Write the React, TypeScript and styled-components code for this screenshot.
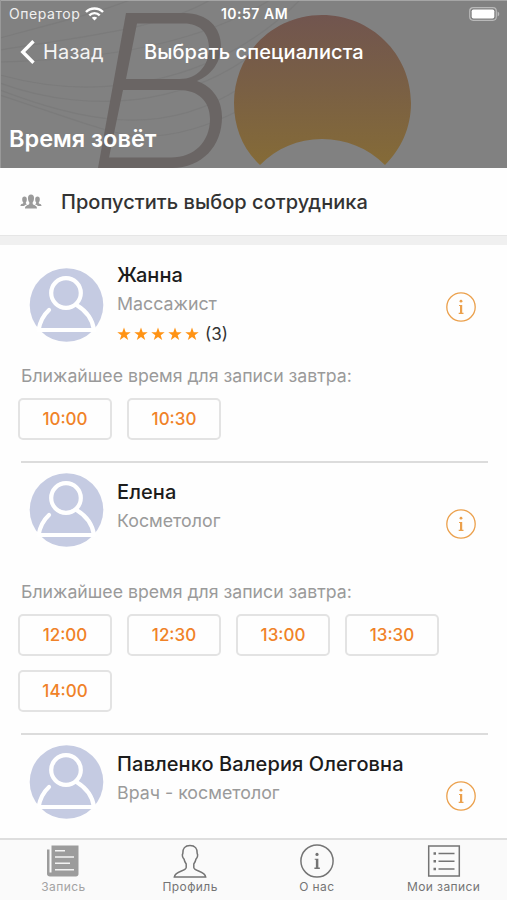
import styled, { createGlobalStyle } from "styled-components";

const GlobalStyle = createGlobalStyle`
  * {
    box-sizing: border-box;
  }
  body {
    margin: 0;
    background-color: #fff;
    font-family: Inter, "Liberation Sans", sans-serif;
  }
`;

const Screen = styled.div`
  width: 507px;
  height: 900px;
  display: flex;
  flex-direction: column;
  overflow: hidden;
  background-color: #fefefe;
`;

/* Header */
const SHeader = styled.header`
  position: relative;
  flex: none;
  height: 168px;
  overflow: hidden;
  background-color: #818181;
  color: #fff;
`;
const Cover = styled.svg`
  position: absolute;
  top: 0;
  left: 0;
`;
const HeaderContent = styled.div`
  position: relative;
  height: 100%;
  display: flex;
  flex-direction: column;
`;
const StatusBar = styled.div`
  height: 27px;
  padding: 0 7px 0 9px;
  display: grid;
  grid-template-columns: 1fr auto 1fr;
  align-items: center;
`;
const Carrier = styled.div`
  display: flex;
  align-items: center;
  gap: 5px;
  font-size: 14px;
  letter-spacing: 0.55px;
  color: #f0f0f0;
`;
const Clock = styled.div`
  font-size: 14px;
  font-weight: 600;
  letter-spacing: 0.5px;
`;
const Battery = styled.svg`
  justify-self: end;
`;
const NavBar = styled.div`
  height: 49px;
  padding-left: 20px;
  display: flex;
  align-items: center;
`;
const BackButton = styled.div`
  width: 124px;
  display: flex;
  align-items: center;
  gap: 8px;
  font-size: 20px;
  letter-spacing: 0.2px;
  color: #f4f4f4;
`;
const NavTitle = styled.div`
  font-size: 20px;
  font-weight: 500;
  letter-spacing: 0.1px;
`;
const SalonName = styled.h1`
  margin: auto 0 0;
  padding: 0 0 15px 9px;
  font-size: 23.5px;
  line-height: 28px;
  font-weight: 600;
`;

/* List */
const SkipRow = styled.div`
  flex: none;
  height: 77px;
  padding: 0 20px;
  display: flex;
  align-items: center;
  gap: 19px;
  border-bottom: 9px solid #f0f0f0;
  box-shadow: inset 0 -1px #e6e6e6;
  font-size: 20px;
  font-weight: 500;
  letter-spacing: 0.04px;
  color: #333;
`;
const List = styled.main`
  flex: 1;
  min-height: 0;
  overflow: hidden;
`;
const Card = styled.section`
  margin: 0 19px 0 21px;
  border-bottom: 2px solid #dcdcdc;

  &:last-child {
    border-bottom: none;
  }
`;
const CardTop = styled.div<{ $rated: boolean }>`
  height: ${props => (props.$rated ? 115 : 113)}px;
  display: flex;
  align-items: flex-start;
  padding: ${props => (props.$rated ? 17 : 16)}px 12px 0 8px;
`;
const AvatarBox = styled.div<{ $top: number }>`
  width: 88px;
  height: 74px;
  margin-top: ${props => props.$top}px;
`;
const Person = styled.div`
  flex: 1;
`;
const Name = styled.div`
  font-size: 20px;
  line-height: 26px;
  font-weight: 500;
  letter-spacing: 0.1px;
  color: #1c1c1c;
  white-space: nowrap;
`;
const Position = styled.div`
  margin-top: 4px;
  font-size: 17.8px;
  line-height: 24px;
  color: #9a9a9a;
`;
const Rating = styled.div`
  margin-top: 7px;
  display: flex;
  align-items: center;
  gap: 3px;
  font-size: 17px;
  line-height: 22px;
  color: #333;
`;
const RatingCount = styled.span`
  margin-left: 3px;
`;
const InfoButton = styled.div`
  width: 30px;
  height: 30px;
  margin-top: 30px;
`;
const NearestLabel = styled.div`
  padding-top: 4px;
  font-size: 17.7px;
  line-height: 24px;
  color: #9a9a9a;
`;
const Slots = styled.div`
  margin: 10px 0 21px -3px;
  display: grid;
  grid-template-columns: repeat(4, 94px);
  gap: 14px 15px;
`;
const Slot = styled.div`
  height: 42px;
  display: flex;
  align-items: center;
  justify-content: center;
  border: 2px solid #e3e3e3;
  border-radius: 5px;
  font-size: 17px;
  font-weight: 500;
  color: #f08228;
`;

/* Tab bar */
const TabBar = styled.nav`
  flex: none;
  height: 62px;
  display: grid;
  grid-template-columns: repeat(4, 1fr);
  border-top: 2px solid #dedede;
  background-color: #fafafa;
`;
const Tab = styled.div<{ $active?: boolean }>`
  display: flex;
  flex-direction: column;
  align-items: center;
  gap: 1px;
  padding-top: 4px;
  font-size: 12px;
  line-height: 16px;
  letter-spacing: 0.4px;
  color: ${props => (props.$active ? "#a3a3a3" : "#747474")};
`;

const CoverArt = () => (
  <Cover width="507" height="168" viewBox="0 0 507 168" fill="none">
    <defs>
      <linearGradient id="sun" x1="0" y1="15" x2="0" y2="165" gradientUnits="userSpaceOnUse">
        <stop offset="0" stopColor="#71554f" />
        <stop offset="0.5" stopColor="#7a6044" />
        <stop offset="1" stopColor="#856b37" />
      </linearGradient>
    </defs>
    <g stroke="#7b7b7b" strokeWidth="1.200">
      <path d="M0 38C60 22 100 12 130 0" />
      <path d="M0 62C80 60 190 50 270 0" />
      <path d="M0 75C90 100 210 90 300 0" />
      <path d="M0 83C90 116 210 110 290 20" />
      <path d="M0 90C80 120 160 140 240 88" />
      <path d="M0 95C70 118 110 134 140 137C180 136 210 125 240 110" />
      <path d="M0 50C70 38 160 30 210 0" />
    </g>
    <path
      fill="#6a6564"
      fillRule="evenodd"
      d="M126 13H184C208 13 221 28 221 46C221 63 211 75 197 81C213 87 222 100 222 117C222 146 202 168 172 168H98ZM137 23.500L126 79H180C197 79 209 66 209 48C209 33 200 23.500 184 23.500ZM123 90L109 157.500H171C194 157.500 210 142 210 119C210 101 198 90 179 90Z"
    />
    <path
      fill="url(#sun)"
      d="M260 165C243 149 234 128 234 103C234 54 273 15 322 15C371 15 411 54 411 103C411 128 401 149 385 165C368 148 346 139 322 139C298 139 277 148 260 165Z"
    />
    <path d="M0 0.500H507" stroke="#a5a5a5" />
    <path d="M0.500 0V168" stroke="#999" />
  </Cover>
);

const Avatar = () => (
  <svg width="75" height="74" viewBox="0 0 75 74" fill="none">
    <circle cx="37.500" cy="37" r="36.800" fill="#c5cbe2" />
    <g stroke="#fff" strokeWidth="4.200" strokeLinecap="round">
      <circle cx="37" cy="25" r="14.800" />
      <path d="M20 42C14.500 47 11 54 9.500 62" />
      <path d="M47.500 37C57.500 43 63.500 51 65 62" />
      <path d="M9.500 62H65" strokeLinecap="butt" />
    </g>
  </svg>
);

const Info = ({ size, color }: { size: number; color: string }) => (
  <svg width={size} height={size} viewBox="0 0 30 30" fill="none">
    <circle cx="15" cy="15" r="14.200" stroke={color} strokeWidth="1.300" />
    <circle cx="15" cy="9.200" r="1.400" fill={color} />
    <path d="M13 13H16.200V20.800H17.500V22H12.700V20.800H14V14H13Z" fill={color} />
  </svg>
);

const Star = () => (
  <svg width="14" height="14" viewBox="0 0 14 14">
    <path fill="#ff9314" d="M7 0.500L8.700 5.200H13.700L9.700 8.200L11.200 13L7 10.100L2.800 13L4.300 8.200L0.300 5.200H5.300Z" />
  </svg>
);

const GroupIcon = () => (
  <svg width="22" height="16" viewBox="0 0 22 16" fill="#9b9b9b">
    <path d="M11 0.500C13 0.500 14 2 14 4C14 6 13.600 7.300 12.700 8.300V10C13.500 11.300 17 11 17 14.500H5C5 11 8.500 11.300 9.300 10V8.300C8.400 7.300 8 6 8 4C8 2 9 0.500 11 0.500Z" />
    <path d="M4.500 2.500C6 2.500 6.800 3.500 6.800 5.200C6.800 6.700 6.500 7.700 5.900 8.300V9.500L7 10.200C5.500 10.800 4.600 11.300 4.200 12H0.500C0.500 9.800 2.500 10.200 3.200 9.300V8.300C2.500 7.600 2.200 6.500 2.200 5.200C2.200 3.500 3 2.500 4.500 2.500Z" />
    <path d="M17.500 2.500C16 2.500 15.200 3.500 15.200 5.200C15.200 6.700 15.500 7.700 16.100 8.300V9.500L15 10.200C16.500 10.800 17.400 11.300 17.800 12H21.500C21.500 9.800 19.500 10.200 18.800 9.300V8.300C19.500 7.600 19.800 6.500 19.800 5.200C19.800 3.500 19 2.500 17.500 2.500Z" />
  </svg>
);

interface Specialist {
  name: string;
  position: string;
  reviews?: number;
  slots?: string[];
}

const specialists: Specialist[] = [
  { name: "Жанна", position: "Массажист", reviews: 3, slots: ["10:00", "10:30"] },
  { name: "Елена", position: "Косметолог", slots: ["12:00", "12:30", "13:00", "13:30", "14:00"] },
  { name: "Павленко Валерия Олеговна", position: "Врач - косметолог" },
];

const SpecialistCard = ({ name, position, reviews, slots }: Specialist) => (
  <Card>
    <CardTop $rated={!!reviews}>
      <AvatarBox $top={reviews ? 6 : -6}>
        <Avatar />
      </AvatarBox>
      <Person>
        <Name>{name}</Name>
        <Position>{position}</Position>
        {reviews && (
          <Rating>
            {[1, 2, 3, 4, 5].map(star => <Star key={star} />)}
            <RatingCount>({reviews})</RatingCount>
          </Rating>
        )}
      </Person>
      <InfoButton>
        <Info size={30} color="#eba04c" />
      </InfoButton>
    </CardTop>
    {slots && <>
      <NearestLabel>Ближайшее время для записи завтра:</NearestLabel>
      <Slots>
        {slots.map(slot => <Slot key={slot}>{slot}</Slot>)}
      </Slots>
    </>}
  </Card>
);

const App = () => {
  return <>
    <GlobalStyle />
    <Screen>
      <SHeader>
        <CoverArt />
        <HeaderContent>
          <StatusBar>
            <Carrier>
              Оператор
              <svg width="19" height="14" viewBox="0 0 19 14" fill="none" stroke="#fff" strokeWidth="2.400">
                <path d="M1 5C5.500 0.300 13.500 0.300 18 5" />
                <path d="M4.300 8.300C7.200 5.400 11.800 5.400 14.700 8.300" />
                <path d="M9.500 13.500L6.800 10.700C8.300 9.300 10.700 9.300 12.200 10.700Z" fill="#fff" stroke="none" />
              </svg>
            </Carrier>
            <Clock>10:57 AM</Clock>
            <Battery width="31" height="14" viewBox="0 0 31 14">
              <rect x="0.700" y="0.700" width="26.600" height="12.600" rx="3.500" fill="none" stroke="#b9b9b9" strokeWidth="1.200" />
              <rect x="2.700" y="2.500" width="22.600" height="9" rx="1.800" fill="#fff" />
              <path d="M28.600 4.500C30.800 5.400 30.800 8.600 28.600 9.500Z" fill="#b9b9b9" />
            </Battery>
          </StatusBar>
          <NavBar>
            <BackButton>
              <svg width="15" height="24" viewBox="0 0 15 24" fill="none" stroke="#fff" strokeWidth="3.400">
                <path d="M13.500 1.300L2.800 12L13.500 22.700" />
              </svg>
              Назад
            </BackButton>
            <NavTitle>Выбрать специалиста</NavTitle>
          </NavBar>
          <SalonName>Время зовёт</SalonName>
        </HeaderContent>
      </SHeader>
      <SkipRow>
        <GroupIcon />
        Пропустить выбор сотрудника
      </SkipRow>
      <List>
        {specialists.map(item => <SpecialistCard key={item.name} {...item} />)}
      </List>
      <TabBar>
        <Tab $active>
          <svg width="34" height="34" viewBox="0 0 34 34">
            <path fill="#9c9c9c" d="M5.500 1.500H32.500V30C32.500 31.500 31.500 32.500 30 32.500H4C2.300 32.500 1 31.500 1 30V5.500H3.500V28.500H5.500Z" />
            <path stroke="#f3f3f3" strokeWidth="1.600" d="M9 6.800H19M9 13H28M9 19.300H24M9 25.700H28" />
          </svg>
          Запись
        </Tab>
        <Tab>
          <svg width="34" height="34" viewBox="0 0 34 34" fill="none" stroke="#747474" strokeWidth="1.500">
            <path d="M17 1.500C12 1.500 9.500 4.500 9.800 9.500C8.800 11 9.600 14 11 15C11.500 17.500 12.500 19 13.200 20V23.500C13 27.500 2 26.500 1.300 33H32.700C32 26.500 21 27.500 20.800 23.500V20C21.500 19 22.500 17.500 23 15C24.400 14 25.200 11 24.200 9.500C24.500 4.500 22 1.500 17 1.500Z" />
          </svg>
          Профиль
        </Tab>
        <Tab>
          <Info size={34} color="#747474" />
          О нас
        </Tab>
        <Tab>
          <svg width="34" height="34" viewBox="0 0 34 34" fill="none" stroke="#747474" strokeWidth="1.500">
            <rect x="1.700" y="2" width="30.600" height="30" />
            <path d="M11.500 9.500H27.500M11.500 17.200H27.500M11.500 25H27.500" />
            <path d="M6.500 9.500H9M6.500 17.200H9M6.500 25H9" strokeWidth="2.500" />
          </svg>
          Мои записи
        </Tab>
      </TabBar>
    </Screen>
  </>
}
export default App;
